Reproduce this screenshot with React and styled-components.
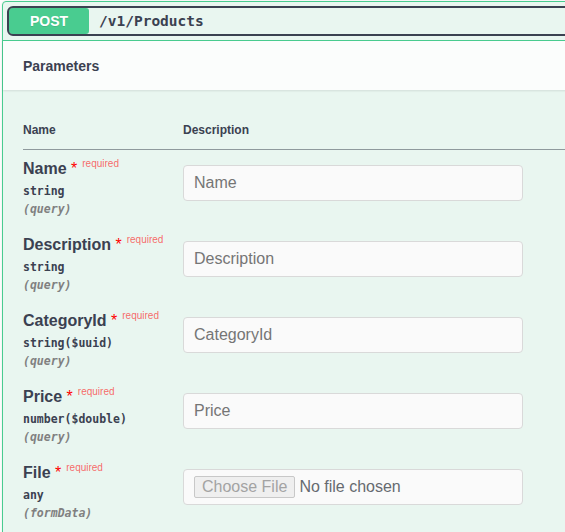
import React from "react";
import styled, { createGlobalStyle } from "styled-components";

const Global = createGlobalStyle`
  html, body { margin: 0; padding: 0; background: #fff; overflow: hidden; }
  body { font-family: "Liberation Sans", Arial, sans-serif; color: #3b4151; }
`;

const Opblock = styled.div`
  margin: 1px 0 0 2px;
  width: 640px;
  border: 1px solid #49cc90;
  border-radius: 4px;
  background: #e9f6f0;
  box-shadow: 0 0 3px rgba(0, 0, 0, 0.1);
`;

const Summary = styled.div`
  display: flex;
  padding: 6px;
  border-bottom: 1px solid #49cc90;
`;

const SummaryControl = styled.div`
  flex: 1;
  display: flex;
  align-items: center;
  height: 26px;
  outline: 2px solid #3b4151;
  border-radius: 4px;
`;

const Method = styled.span`
  display: flex;
  align-items: center;
  justify-content: center;
  width: 80px;
  height: 26px;
  border-radius: 3px;
  background: #49cc90;
  color: #fff;
  font-size: 14px;
  font-weight: 700;
  text-shadow: 0 1px 0 rgba(0, 0, 0, 0.1);
`;

const Path = styled.span`
  padding: 0 10px;
  font-family: "DejaVu Sans Mono", "Liberation Mono", monospace;
  font-size: 14.5px;
  font-weight: 700;
  color: #3b4151;
`;

const SectionHeader = styled.div`
  display: flex;
  align-items: center;
  height: 49px;
  padding: 0 20px;
  background: rgba(255, 255, 255, 0.8);
  box-shadow: 0 1px 2px rgba(0, 0, 0, 0.1);
  position: relative;
`;

const Title = styled.h4`
  margin: 0;
  font-size: 14px;
  font-weight: 700;
  color: #3b4151;
`;

const TableContainer = styled.div`
  padding: 20px;
`;

const Table = styled.table`
  width: 100%;
  border-collapse: collapse;
`;

const Th = styled.th`
  text-align: left;
  padding: 13px 0 11px;
  font-size: 12px;
  line-height: 15px;
  font-weight: 700;
  color: #3b4151;
  border-bottom: 1px solid rgba(59, 65, 81, 0.3);
  width: ${(p) => p.$w || "auto"};
`;

const Td = styled.td`
  padding: 10px 0;
  vertical-align: top;
`;

const ParamName = styled.div`
  font-size: 16px;
  line-height: 18px;
  height: 18px;
  font-weight: 700;
  color: #3b4151;
  white-space: nowrap;
`;

const Star = styled.span`
  color: red;
  font-weight: 400;
`;

const Required = styled.span`
  position: relative;
  top: -7px;
  padding: 0 5px;
  font-size: 10px;
  line-height: 10px;
  font-weight: 400;
  color: rgba(255, 0, 0, 0.6);
`;

const ParamType = styled.div`
  padding: 6px 0 4px;
  font-family: "DejaVu Sans Mono", "Liberation Mono", monospace;
  font-size: 11.5px;
  line-height: 14px;
  height: 14px;
  font-weight: 700;
  color: #3b4151;
`;

const ParamIn = styled.div`
  padding-top: 1px;
  font-family: "DejaVu Sans Mono", "Liberation Mono", monospace;
  font-size: 11.5px;
  line-height: 13px;
  height: 13px;
  font-weight: 700;
  font-style: italic;
  color: #808080;
`;

const Input = styled.input`
  display: block;
  box-sizing: border-box;
  width: 340px;
  height: 36px;
  margin: 5px 0;
  padding: 0 10px;
  border: 1px solid #d9d9d9;
  border-radius: 4px;
  background: #fafafa;
  font-family: "Liberation Sans", Arial, sans-serif;
  font-size: 16px;
  color: #3b4151;
  outline: none;
  &::placeholder { color: #757575; }
`;

const FileBox = styled.div`
  display: flex;
  align-items: center;
  box-sizing: border-box;
  width: 340px;
  height: 36px;
  margin: 5px 0;
  padding: 0 10px;
  border: 1px solid #d9d9d9;
  border-radius: 4px;
  background: #fafafa;
  font-size: 16px;
`;

const FileButton = styled.span`
  display: flex;
  align-items: center;
  box-sizing: border-box;
  height: 22px;
  padding: 0 7px;
  margin-right: 4px;
  border: 1px solid #c8c8c8;
  border-radius: 2px;
  background: #efefef;
  color: #a3a3a3;
`;

const FileText = styled.span`
  color: #666a70;
`;

const params = [
  { name: "Name", type: "string", in: "query" },
  { name: "Description", type: "string", in: "query" },
  { name: "CategoryId", type: "string($uuid)", in: "query" },
  { name: "Price", type: "number($double)", in: "query" },
  { name: "File", type: "any", in: "formData", file: true },
];

export default function App() {
  return (
    <>
      <Global />
      <Opblock>
        <Summary>
          <SummaryControl>
            <Method>POST</Method>
            <Path>/v1/Products</Path>
          </SummaryControl>
        </Summary>
        <SectionHeader>
          <Title>Parameters</Title>
        </SectionHeader>
        <TableContainer>
          <Table>
            <thead>
              <tr>
                <Th $w="160px">Name</Th>
                <Th>Description</Th>
              </tr>
            </thead>
            <tbody>
              {params.map((p) => (
                <tr key={p.name}>
                  <Td>
                    <ParamName>
                      {p.name}
                      <Star>&nbsp;*</Star>
                      <Required>required</Required>
                    </ParamName>
                    <ParamType>{p.type}</ParamType>
                    <ParamIn>({p.in})</ParamIn>
                  </Td>
                  <Td>
                    {p.file ? (
                      <FileBox>
                        <FileButton>Choose File</FileButton>
                        <FileText>No file chosen</FileText>
                      </FileBox>
                    ) : (
                      <Input placeholder={p.name} />
                    )}
                  </Td>
                </tr>
              ))}
            </tbody>
          </Table>
        </TableContainer>
      </Opblock>
    </>
  );
}
